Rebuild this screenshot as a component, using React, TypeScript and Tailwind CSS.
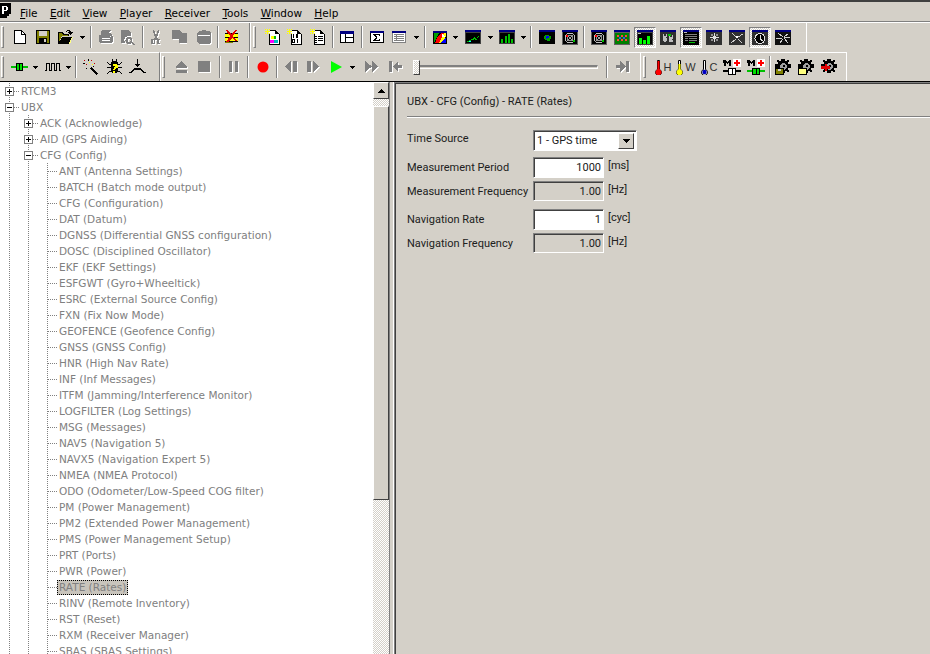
import React from "react";

const GRAY = "#808080";
const S = ({ w = 16, h = 16, children }: { w?: number; h?: number; children?: React.ReactNode }) => (
  <svg width={w} height={h} viewBox={`0 0 ${w} ${h}`} shapeRendering="crispEdges" className="block shrink-0">
    {children}
  </svg>
);
const Dis = ({ d, w = 16, h = 16 }: { d: string; w?: number; h?: number }) => (
  <S w={w} h={h}>
    <path d={d} fill="#fff" transform="translate(1,1)" />
    <path d={d} fill={GRAY} fillRule="evenodd" />
  </S>
);

const Btn = ({ c, children }: { c: string; children?: React.ReactNode }) => (
  <div className={`${c} h-[28px] flex items-center justify-center shrink-0`}>{children}</div>
);
const Arrow = ({ c }: { c: string }) => (
  <Btn c={c}>
    <svg width="5" height="3" viewBox="0 0 5 3" shapeRendering="crispEdges"><path d="M0 0h5v1h-1v1h-1v1h-1v-1h-1v-1h-1z" fill="#000" /></svg>
  </Btn>
);
const Sep = ({ c }: { c: string }) => (
  <div className={`${c} h-[28px] flex items-center justify-center shrink-0`}>
    <div className="w-[2px] h-[22px] border-l border-[#808080] border-r border-r-white" />
  </div>
);
const Grip = ({ c }: { c: string }) => (
  <div className={`${c} h-[28px] flex items-center shrink-0`}>
    <div className="w-[3px] h-[22px] border-l border-t border-white border-r border-b border-r-[#808080] border-b-[#808080]" />
  </div>
);
const Pressed = ({ children }: { children: React.ReactNode }) => (
  <div className="w-[22px] h-[21px] flex items-center justify-center border border-t-[#808080] border-l-[#808080] border-r-white border-b-white bg-[repeating-conic-gradient(#ffffff_0_25%,#d4d0c8_0_50%)] bg-[length:2px_2px]">
    {children}
  </div>
);

const NewDoc = () => (
  <S w={12} h={14}><path d="M0 0h8v1h1v1h1v1h1v1h1v10h-12z" fill="#000" /><path d="M1 1h6v4h4v8h-10zM8 2h1v1h1v1h-2z" fill="#fff" /></S>
);
const Save = () => (
  <S w={14} h={14}>
    <rect width="14" height="14" fill="#000" />
    <rect x="1" y="1" width="12" height="12" fill="#808000" />
    <rect x="3" y="1" width="8" height="5" fill="#d4d0c8" />
    <rect x="3" y="8" width="8" height="5" fill="#000" />
    <rect x="8" y="9" width="2" height="3" fill="#d4d0c8" />
  </S>
);
const OpenF = () => (
  <S w={15} h={14}>
    <path d="M0 3h5v1h6v2h-7l-3 7h-1z" fill="#808000" />
    <path d="M1 13l3-6h11l-3 7h-11z" fill="#ffff80" />
    <path d="M0 2h5v1h1v1h5v2h-1v-1h-5v-1h-1v-1h-3v8h1v-1h1v-2h1v-1h10v1h-1v2h-1v2h-1v2h-12z" fill="#000" />
    <path d="M8 1h1v-1h3v1h1v1h2v1h-1v1h-1v1h-1v-1h-1v-1h-1v-1h1v-1h-2v1h-1z" fill="#000" />
  </S>
);
const Print = () => <Dis w={16} h={14} d="M4 0h9v1h-1v1h-1v1h-8zM3 3h9l2 2v1h-2l-1 1h-8zM1 5h2v2h9l1-1h2v5l-2 2h-11l-1-2zM4 8h8v1h-8zM4 10h8v1h-8z" />;
const Preview = () => <Dis w={16} h={15} d="M0 0h7l3 3v3h-3a4 4 0 0 0 -3 6v1h-4zM8 7a3.500 3.500 0 1 1 -.1 0zM8 9a1.500 1.500 0 1 0 .1 0zM11 12l3 2-1 1-3-2z" />;
const Cut = () => <Dis w={11} h={15} d="M2 0h1l2 5 2-5h1v2l-2 5 1 2h2v5h-3v-3l-1-2-1 2v3h-4v-5h3l1-2-2-5zM2 10v3h1v-3zM8 10v3h1v-3z" />;
const Copy = () => <Dis w={15} h={14} d="M0 0h7l3 3h5v10h-8v-4h-7z" />;
const Paste = () => <Dis w={16} h={15} d="M3 1h3v-1h4v1h3l2 2v9l-2 2h-10l-2-2v-9zM2 5v1h12v-1z" />;
const XDoc = () => (
  <S w={16} h={14}>
    <path d="M1 3h13v9h-13z" fill="#ffff00" />
    <path d="M1 3h13v1h-13zM1 11h13v1h-13zM1 7h13v1h-13z" fill="#000" />
    <path d="M2 0h2v1h1v1h1v1h1v1h1v-1h1v-1h1v-1h1v-1h2l-4 6 3 4h1v1h-2v-1h-1l-2-2-2 3h-1v1h-3l4-6-3-4z" fill="#e00000" />
    <path d="M1 12h8v1h-8z" fill="#808000" />
  </S>
);
const Star = () => <path d="M2 0h1v2h2v1h-2v2h-1v-2h-2v-1h2zM0 0h1v1h-1zM4 0h1v1h-1zM0 4h1v1h-1zM4 4h1v1h-1z" fill="#ffff00" stroke="none" />;
const DocFrame = () => (
  <>
    <path d="M5 2h6l3 3v10h-10v-11z" fill="#fff" />
    <path d="M5 1h6v1h1v1h1v1h1v1h1v11h-11v-12h1zM5 2v2h-0v11h9v-10h-4v-3z" fill="#000" fillRule="evenodd" />
    <Star />
  </>
);
const NewMap = () => (
  <S>
    <DocFrame />
    <rect x="6" y="7" width="3" height="3" fill="#ffff00" /><rect x="9" y="7" width="2" height="3" fill="#00c000" />
    <rect x="5" y="11" width="4" height="3" fill="#ff00ff" /><rect x="9" y="11" width="4" height="3" fill="#00c0c0" />
  </S>
);
const NewBin = () => (
  <S>
    <DocFrame />
    <path d="M6 5h1v4h-1zM9 5h2v4h-2zM5 10h3v4h-3zM10 10h1v4h-1z" fill="#000" />
    <path d="M6 11h1v2h-1zM10 6h0z" fill="#fff" />
  </S>
);
const NewTxt = () => (
  <S>
    <DocFrame />
    <path d="M5 7h2v1h-2zM8 7h5v1h-5zM5 9h2v1h-2zM8 9h5v1h-5zM5 11h2v1h-2zM8 11h5v1h-5zM5 13h2v1h-2z" fill="#000" />
  </S>
);
const Panes = () => (
  <S w={14} h={12}>
    <rect width="14" height="12" fill="#000" /><rect x="1" y="3" width="12" height="8" fill="#fff" />
    <rect x="0" y="0" width="14" height="3" fill="#000080" />
    <rect x="5" y="3" width="1" height="8" fill="#000" /><rect x="5" y="6" width="8" height="1" fill="#000" />
  </S>
);
const Sigma = () => (
  <S w={14} h={12}>
    <rect width="14" height="12" fill="#000" /><rect x="1" y="2" width="12" height="9" fill="#fff" />
    <rect x="0" y="0" width="14" height="2" fill="#000080" />
    <path d="M3 3h7v2h-1v-1h-4l2 2v1l-2 2h4v-1h1v2h-7v-1l3-2.500-3-2.500z" fill="#000" />
  </S>
);
const Table = () => (
  <S w={14} h={12}>
    <rect width="14" height="12" fill="#808080" /><rect x="1" y="2" width="12" height="9" fill="#fff" />
    <rect x="0" y="0" width="14" height="2" fill="#000080" />
    <path d="M2 3h10v1h-10zM2 5h10v1h-10zM2 7h10v1h-10zM2 9h10v1h-10zM4 3h1v7h-1z" fill="#808080" />
  </S>
);
const MapI = () => (
  <S w={14} h={13}>
    <rect width="14" height="13" fill="#000" /><rect width="14" height="2" fill="#000080" />
    <path d="M1 2h5l-2 4-3 6z" fill="#00a000" /><path d="M4 7l4-5h3l-5 10h-4z" fill="#ff0000" /><path d="M6 12l5-10h2v3l-4 7z" fill="#ffff00" />
    <path d="M8 12l5-6v6z" fill="#0000ff" /><path d="M9 2l3 4h-3z" fill="#fff" />
  </S>
);
const LineCh = () => (
  <S w={16} h={14}>
    <rect width="16" height="14" fill="#404040" /><rect width="16" height="2" fill="#000080" /><rect x="1" y="3" width="14" height="10" fill="#000" />
    <path d="M2 11h2v-1h2v-1h2v-1h1v-1h1v1h1v1h1v-2h1v-1h1v1h-1v1h-1v2h-2v-1h-1v1h-3v1h-2v1h-3z" fill="#00c000" />
    <path d="M4 11h2v1h-2z" fill="#00ffff" />
  </S>
);
const BarCh = () => (
  <S w={16} h={14}>
    <rect width="16" height="14" fill="#404040" /><rect width="16" height="2" fill="#000080" /><rect x="1" y="3" width="14" height="10" fill="#000" />
    <path d="M2 9h2v4h-2zM6 6h2v7h-2zM9 4h2v9h-2zM12 9h2v4h-2z" fill="#00c000" />
  </S>
);
const Globe = () => (
  <S w={16} h={14}>
    <rect width="16" height="14" fill="#000" /><rect width="16" height="2" fill="#000080" />
    <path d="M6 5h4v1h2v3h-1v2h-3v-1h-2v-1h-1v-3h1z" fill="#00a000" /><path d="M7 6h3v2h-2v1h-1z" fill="#0000ff" />
  </S>
);
const Radar = () => (
  <S w={16} h={15}>
    <rect width="16" height="15" fill="#606060" /><rect width="16" height="2" fill="#000080" /><rect x="1" y="2" width="14" height="12" fill="#000" />
    <circle cx="8" cy="8" r="5" fill="none" stroke="#c0c0c0" strokeWidth="1" />
    <circle cx="8" cy="8" r="2.500" fill="none" stroke="#909090" strokeWidth="1" />
    <path d="M4 4l8 8M12 4l-8 8" stroke="#a0a0a0" />
    <path d="M11 10h2v2h-2z" fill="#00c000" /><path d="M4 5h2v2h-2z" fill="#ff0000" />
  </S>
);
const Dot = () => (
  <S w={16} h={15}>
    <rect width="16" height="15" fill="#606060" /><rect width="16" height="2" fill="#000080" /><rect x="1" y="3" width="14" height="11" fill="#008000" />
    <path d="M3 5h2v2h-2zM7 5h2v2h-2zM11 5h2v2h-2zM3 9h2v2h-2zM7 9h2v2h-2zM11 9h2v2h-2z" fill="#ff4040" />
    <path d="M5 7h2v2h-2zM9 7h2v2h-2z" fill="#4040ff" />
  </S>
);
const Bars2 = () => (
  <S w={16} h={15}>
    <rect width="16" height="15" fill="#404040" /><rect width="16" height="2" fill="#000080" /><rect x="1" y="3" width="14" height="11" fill="#000" />
    <path d="M2 8h3v6h-3zM6 10h3v4h-3zM10 6h3v8h-3z" fill="#00ff00" />
    <rect x="1" y="3" width="3" height="1" fill="#c0c0c0" />
  </S>
);
const Dish = () => (
  <S w={16} h={15}>
    <rect width="16" height="15" fill="#303030" /><rect width="16" height="2" fill="#000080" />
    <path d="M3 4h1v2h2v-2h1v3h-1v1h1v3h-1v1h-2v-1h-1zM9 5h1v2h2v-2h1v4h-1v1h1v2h-4z" fill="#c0c0c0" />
    <path d="M8 4h3v2h-3z" fill="#00c000" />
  </S>
);
const TextW = () => (
  <S w={16} h={15}>
    <rect width="16" height="15" fill="#000" /><rect width="16" height="2" fill="#000080" />
    <rect x="1" y="2" width="3" height="1" fill="#c0c0c0" />
    <path d="M2 4h12v1h-12zM2 6h12v1h-12zM2 8h3v1h-3zM2 10h3v1h-3zM6 8h8v1h-8zM6 10h8v1h-8z" fill="#808080" />
    <path d="M6 12h6v1h-6z" fill="#00c000" />
  </S>
);
const Compass = () => (
  <S w={16} h={15}>
    <rect width="16" height="15" fill="#303030" /><rect width="16" height="2" fill="#000080" />
    <path d="M8 3h1v3h1v1h3v1h-3v1h-1v3h-1v-3h-1v-1h-3v-1h3v-1h1z" fill="#e0e0e0" />
    <path d="M5 4h2v2h-2zM10 4h2v2h-2zM5 9h2v2h-2zM10 9h2v2h-2z" fill="#909090" />
  </S>
);
const Satel = () => (
  <S w={16} h={15}>
    <rect width="16" height="15" fill="#303030" /><rect width="16" height="2" fill="#000080" />
    <path d="M3 3l4 4M13 13l-4-4M2 13l5-4M14 4l-5 3" stroke="#d0d0d0" strokeWidth="1" fill="none" />
    <path d="M7 6h2v2h-2z" fill="#fff" />
  </S>
);
const Clock = () => (
  <S w={16} h={15}>
    <rect width="16" height="15" fill="#303030" /><rect width="16" height="2" fill="#000080" />
    <circle cx="8" cy="8.500" r="5" fill="#000" stroke="#e0e0e0" strokeWidth="1" />
    <path d="M8 5v4l3 2" stroke="#e0e0e0" strokeWidth="1" fill="none" />
  </S>
);
const Burst = () => (
  <S w={16} h={15}>
    <rect width="16" height="15" fill="#101010" /><rect width="16" height="2" fill="#000080" />
    <path d="M3 3l5 4M13 4l-4 3M1 8h6M9 7h6M5 13l3-4M13 13l-4-5" stroke="#d0d0d0" strokeWidth="1" fill="none" />
  </S>
);

/* row 2 */
const Wire = () => (
  <S w={17} h={8}>
    <rect x="0" y="3" width="17" height="2" fill="#00c000" />
    <rect x="5" y="0" width="7" height="8" fill="#000" /><rect x="6" y="1" width="5" height="6" fill="#00e000" />
    <rect x="8" y="1" width="1" height="6" fill="#000" />
  </S>
);
const Wave = () => (
  <S w={16} h={8}><path d="M0 7.500H1.500V.5H4.500V7.500H6.500V.5H9.500V7.500H11.500V.5H14.500V7.500H16" fill="none" stroke="#000" /></S>
);
const Wand = () => (
  <S w={17} h={16}>
    <path d="M8 8h1v1h1v1h1v1h1v1h1v1h1v1h1v1h-1v1h-1v-1h-1v-1h-1v-1h-1v-1h-1v-1h-1v-1h-1v-1h1z" fill="#000" />
    <path d="M1 1h1v1h-1zM8 1h1v1h-1zM3 5h1v1h-1zM11 4h1v1h-1z" fill="#c00000" />
    <path d="M5 0h1v2h-1zM0 4h2v1h-2zM10 7h1v1h-1zM3 9h1v1h-1z" fill="#000" />
    <path d="M6 3h1v1h-1zM9 5h1v1h-1z" fill="#ffff00" />
  </S>
);
const Bug = () => (
  <S w={15} h={16}>
    <path d="M5 2h5v1h1v10h-1v1h-5v-1h-1v-10h1z" fill="#000" />
    <path d="M0 3h1v1h1v1h2v1h-2v-1h-1v-1h-1zM15 3h-1v1h-1v1h-2v1h2v-1h1v-1h1zM0 8h4v1h-4zM11 8h4v1h-4zM0 14h1v-1h1v-1h2v1h-2v1h-1v1h-1zM15 14h-1v-1h-1v-1h-2v1h2v1h1v1h1z" fill="#000" />
    <path d="M5 0h1v2h-1zM9 0h1v2h-1z" fill="#000" />
    <path d="M6 5h4v1h1v3h-2v1h-1v1h-2v-1h1v-2h1v-1h-2zM6 12h2v2h-2z" fill="#ffff00" />
  </S>
);
const Antenna = () => (
  <S w={17} h={16}>
    <path d="M8 0h1v5h2v1h-1v1h-1v1h-1v-1h-1v-1h-1v-1h2z" fill="#000" />
    <path d="M5 9h7v1h1v1h1v1h1v1h2v1h-3v-1h-1v-1h-1v-1h-7v1h-1v1h-1v1h-4v-1h3v-1h1v-1h1v-1h1z" fill="#000" />
  </S>
);
const Eject = () => <Dis w={13} h={12} d="M6 0h1l5 6v1h-11v-1zM1 9h11v3h-11z" />;
const Stop = () => <Dis w={13} h={12} d="M0 0h12v11h-12z" />;
const Pause = () => <Dis w={10} h={12} d="M0 0h3v11h-3zM6 0h3v11h-3z" />;
const Rec = () => (
  <svg width="12" height="12" viewBox="0 0 12 12" className="block"><circle cx="6" cy="6" r="5.500" fill="#ff0000" /></svg>
);
const Prev = () => <Dis w={13} h={12} d="M6 0v11l-6-5.500zM8 0h4v11h-4z" />;
const Next = () => <Dis w={13} h={12} d="M0 0h4v11h-4zM6 0l6 5.500-6 5.500z" />;
const Play = () => (
  <svg width="11" height="12" viewBox="0 0 11 12" className="block"><path d="M0 0l11 6-11 6z" fill="#00ff00" /></svg>
);
const FF = () => <Dis w={14} h={12} d="M0 0l7 5.500-7 5.500zM7 0l6 5.500-6 5.500z" />;
const Skip = () => <Dis w={14} h={12} d="M0 0h3v11h-3zM9 0v4h4v3h-4v4l-5-5.500z" />;
const SkipE = () => <Dis w={14} h={12} d="M0 4h4v-4l6 5.500-6 5.500v-4h-4zM10 0h3v11h-3z" />;

const Thermo = ({ fill, letter, level }: { fill: string; letter: string; level: "full" | "mid" | "low" }) => (
  <div className="flex items-center">
    <svg width="7" height="16" viewBox="0 0 7 16" className="block">
      <path d="M2.500 1.500h2v9a3 3 0 1 1 -2 0z" fill="#fff" stroke="#000" strokeWidth="1" />
      {level === "full" && <path d="M2.500 2h2v8.500a3 3 0 1 1 -2 0z" fill={fill} />}
      {level === "mid" && <path d="M2.500 5h2v5.500a3 3 0 1 1 -2 0z" fill={fill} />}
      {level === "low" && <circle cx="3.500" cy="13" r="2.200" fill={fill} />}
    </svg>
    <span className="font-['Liberation_Sans',sans-serif] text-[11px] leading-none text-[#303030] ml-[2px]">{letter}</span>
  </div>
);
const MPlus = ({ green = false }: { green?: boolean }) => (
  <S w={18} h={16}>
    <path d="M0 1h3v1h1v1h1v-1h1v-1h2v6h-2v-3h-1v1h-1v-1h-1v3h-2z" fill="#000" />
    <rect x="10" y="0" width="8" height="8" fill="#fff" />
    <path d="M13 1h2v2h2v2h-2v2h-2v-2h-2v-2h2z" fill="#ff0000" />
    <rect x="0" y="11" width="18" height="2" fill={green ? "#00c000" : "#000"} />
    <rect x="5" y="9" width="8" height="7" fill="#000" />
    <rect x="6" y="10" width="6" height="5" fill={green ? "#00e000" : "#fff"} />
    <rect x="9" y="10" width="1" height="5" fill="#000" />
  </S>
);
const Gear = ({ children }: { children?: React.ReactNode }) => (
  <S w={16} h={16}>
    <path d="M6 0h4v2h2v-1h2v2h-1v2h3v4h-3v2h1v2h-2v-1h-2v2h-4v-2h-2v1h-2v-2h1v-2h-3v-4h3v-2h-1v-2h2v1h2z" fill="#000" />
    <path d="M7 4h3v1h1v1h1v3h-1v1h-1v1h-3v-1h-1v-1h-1v-3h1v-1h1z" fill="#a0a0a0" />
    <path d="M8 6h2v2h-2z" fill="#000" />
    {children}
  </S>
);

const RowA = () => (
  <div className="flex h-[30px] border-t border-t-white shrink-0">
    <div className="flex w-[250px] shrink-0 border-r border-r-[#808080]">
      <Grip c="w-[8px] pl-[1px]" />
      <Btn c="w-[23px]"><NewDoc /></Btn>
      <Btn c="w-[23px]"><Save /></Btn>
      <Btn c="w-[23px]"><OpenF /></Btn>
      <Arrow c="w-[10px]" />
      <Sep c="w-[7px]" />
      <Btn c="w-[23px]"><Print /></Btn>
      <Btn c="w-[23px]"><Preview /></Btn>
      <Sep c="w-[6px]" />
      <Btn c="w-[20px]"><Cut /></Btn>
      <Btn c="w-[27px]"><Copy /></Btn>
      <Btn c="w-[22px]"><Paste /></Btn>
      <Sep c="w-[6px]" />
      <Btn c="w-[22px]"><XDoc /></Btn>
    </div>
    <div className="flex w-[557px] shrink-0 border-l border-l-white border-r border-r-white">
      <Grip c="w-[11px] pl-[2px]" />
      <Btn c="w-[21px]"><NewMap /></Btn>
      <Btn c="w-[23px]"><NewBin /></Btn>
      <Btn c="w-[24px]"><NewTxt /></Btn>
      <Sep c="w-[6px]" />
      <Btn c="w-[22px]"><Panes /></Btn>
      <Sep c="w-[8px]" />
      <Btn c="w-[21px]"><Sigma /></Btn>
      <Btn c="w-[24px]"><Table /></Btn>
      <Arrow c="w-[10px]" />
      <Sep c="w-[8px]" />
      <Btn c="w-[21px]"><MapI /></Btn>
      <Arrow c="w-[10px]" />
      <Btn c="w-[26px]"><LineCh /></Btn>
      <Arrow c="w-[8px]" />
      <Btn c="w-[26px]"><BarCh /></Btn>
      <Arrow c="w-[7px]" />
      <Sep c="w-[8px]" />
      <Btn c="w-[23px]"><Globe /></Btn>
      <Btn c="w-[23px]"><Radar /></Btn>
      <Sep c="w-[6px]" />
      <Btn c="w-[23px]"><Radar /></Btn>
      <Btn c="w-[23px]"><Dot /></Btn>
      <Btn c="w-[23px]"><Pressed><Bars2 /></Pressed></Btn>
      <Btn c="w-[23px]"><Dish /></Btn>
      <Btn c="w-[23px]"><Pressed><TextW /></Pressed></Btn>
      <Btn c="w-[23px]"><Compass /></Btn>
      <Btn c="w-[23px]"><Satel /></Btn>
      <Btn c="w-[23px]"><Pressed><Clock /></Pressed></Btn>
      <Btn c="w-[23px]"><Burst /></Btn>
    </div>
  </div>
);

const RowB = () => (
  <div className="flex h-[30px] border-b border-b-black shrink-0">
    <div className="flex w-[160px] shrink-0 border-t border-t-white border-r border-r-[#808080]">
      <Grip c="w-[8px] pl-[1px]" />
      <Btn c="w-[22px]"><Wire /></Btn>
      <Arrow c="w-[11px]" />
      <Btn c="w-[23px]"><Wave /></Btn>
      <Arrow c="w-[9px]" />
      <Sep c="w-[6px]" />
      <Btn c="w-[24px]"><Wand /></Btn>
      <Btn c="w-[23px]"><Bug /></Btn>
      <Btn c="w-[23px]"><Antenna /></Btn>
    </div>
    <div className="flex w-[481px] shrink-0 border-t border-t-white border-l border-l-white border-r border-r-white">
      <Grip c="w-[10px] pl-[1px]" />
      <Btn c="w-[21px]"><Eject /></Btn>
      <Btn c="w-[25px]"><Stop /></Btn>
      <Sep c="w-[5px]" />
      <Btn c="w-[23px]"><Pause /></Btn>
      <Sep c="w-[6px]" />
      <Btn c="w-[23px]"><Rec /></Btn>
      <Sep c="w-[6px]" />
      <Btn c="w-[22px]"><Prev /></Btn>
      <Btn c="w-[23px]"><Next /></Btn>
      <Btn c="w-[22px]"><Play /></Btn>
      <Arrow c="w-[10px]" />
      <Btn c="w-[29px]"><FF /></Btn>
      <Btn c="w-[20px]"><Skip /></Btn>
      <div className="w-[196px] h-[28px] flex items-center ml-[2px] shrink-0">
        <div className="w-[7px] h-[15px] ml-[5px] shrink-0 border border-t-white border-l-white border-r-[#404040] border-b-[#404040] bg-[repeating-conic-gradient(#ffffff_0_25%,#d4d0c8_0_50%)] bg-[length:2px_2px]" />
        <div className="w-[178px] h-[4px] border-t-2 border-t-[#808080] border-b border-b-white border-r border-r-white" />
      </div>
      <Sep c="w-[6px]" />
      <Btn c="w-[26px]"><SkipE /></Btn>
    </div>
    <div className="flex w-[206px] shrink-0 border-t border-t-white border-r border-r-white">
      <Grip c="w-[11px] pl-[2px]" />
      <Btn c="w-[22px]"><Thermo fill="#ff0000" letter="H" level="full" /></Btn>
      <Btn c="w-[24px]"><Thermo fill="#ffff00" letter="W" level="mid" /></Btn>
      <Btn c="w-[22px]"><Thermo fill="#0000c0" letter="C" level="low" /></Btn>
      <Btn c="w-[24px]"><MPlus /></Btn>
      <Btn c="w-[24px]"><MPlus green /></Btn>
      <Sep c="w-[3px]" />
      <Btn c="w-[23px]"><Gear><path d="M0 9h9v7h-9z" fill="#000" /><path d="M1 10h7v5h-7z" fill="#808000" /><path d="M3 10h3v2h-3z" fill="#d0d0d0" /></Gear></Btn>
      <Btn c="w-[23px]"><Gear><path d="M0 9h9v7h-9z" fill="#000" /><path d="M1 10h7v5h-7z" fill="#ffff80" /></Gear></Btn>
      <Btn c="w-[24px]"><Gear><path d="M0 7h4v-2h2v2h3v3h-3v2h-2v-2h-4z" fill="#e00000" /></Gear></Btn>
    </div>
  </div>
);

type Kind = "v" | "t" | "plus" | "minus";
const Cell = ({ k }: { k: Kind }) => (
  <svg width="19" height="16" viewBox="0 0 19 16" shapeRendering="crispEdges" className="block shrink-0">
    <path d="M9.500 0V16" stroke={GRAY} strokeDasharray="1 1" />
    {k !== "v" && <path d="M10 8.500H19" stroke={GRAY} strokeDasharray="1 1" />}
    {(k === "plus" || k === "minus") && (
      <>
        <rect x="5.500" y="4.500" width="8" height="8" fill="#fff" stroke={GRAY} />
        <path d="M7 8.500h5" stroke="#000" />
        {k === "plus" && <path d="M9.500 6v5" stroke="#000" />}
      </>
    )}
  </svg>
);

const Row = ({ cells, children, sel = false }: { cells: Kind[]; children: string; sel?: boolean }) => (
  <div className="flex h-[16px] items-center shrink-0">
    {cells.map((k, i) => <Cell key={i} k={k} />)}
    {sel ? (
      <span className="h-[15px] flex items-center px-[1px] ml-[0px] bg-[#c8c4bc] border border-dotted border-black text-[#808080] whitespace-nowrap">{children}</span>
    ) : (
      <span className="ml-[2px] text-[#808080] whitespace-nowrap">{children}</span>
    )}
  </div>
);

const leaves = [
  "ANT (Antenna Settings)", "BATCH (Batch mode output)", "CFG (Configuration)", "DAT (Datum)",
  "DGNSS (Differential GNSS configuration)", "DOSC (Disciplined Oscillator)", "EKF (EKF Settings)",
  "ESFGWT (Gyro+Wheeltick)", "ESRC (External Source Config)", "FXN (Fix Now Mode)", "GEOFENCE (Geofence Config)",
  "GNSS (GNSS Config)", "HNR (High Nav Rate)", "INF (Inf Messages)", "ITFM (Jamming/Interference Monitor)",
  "LOGFILTER (Log Settings)", "MSG (Messages)", "NAV5 (Navigation 5)", "NAVX5 (Navigation Expert 5)",
  "NMEA (NMEA Protocol)", "ODO (Odometer/Low-Speed COG filter)", "PM (Power Management)",
  "PM2 (Extended Power Management)", "PMS (Power Management Setup)", "PRT (Ports)", "PWR (Power)",
  "RATE (Rates)", "RINV (Remote Inventory)", "RST (Reset)", "RXM (Receiver Manager)", "SBAS (SBAS Settings)",
];

const Tree = () => (
  <div className="flex-1 min-w-0 overflow-hidden bg-white pt-[1px] font-['DejaVu_Sans',sans-serif] text-[10.5px] leading-none flex flex-col">
    <Row cells={["plus"]}>RTCM3</Row>
    <Row cells={["minus"]}>UBX</Row>
    <Row cells={["v", "plus"]}>ACK (Acknowledge)</Row>
    <Row cells={["v", "plus"]}>AID (GPS Aiding)</Row>
    <Row cells={["v", "minus"]}>CFG (Config)</Row>
    {leaves.map((l) => (
      <Row key={l} cells={["v", "v", "t"]} sel={l === "RATE (Rates)"}>{l}</Row>
    ))}
  </div>
);

const Scrollbar = () => (
  <div className="w-[16px] shrink-0 flex flex-col bg-[repeating-conic-gradient(#ffffff_0_25%,#d4d0c8_0_50%)] bg-[length:2px_2px]">
    <div className="h-[17px] bg-[#d4d0c8] flex items-center justify-center border border-t-white border-l-white border-r-[#404040] border-b-[#404040]">
      <svg width="7" height="4" viewBox="0 0 7 4" shapeRendering="crispEdges"><path d="M3 0h1v1h1v1h1v1h1v1h-7v-1h1v-1h1v-1h1z" fill="#000" /></svg>
    </div>
    <div className="h-[394px] mt-[7px] bg-[#d4d0c8] border border-t-white border-l-white border-r-[#404040] border-b-[#404040]" />
  </div>
);

const Field = ({ value, editable }: { value: string; editable: boolean }) => (
  <div className={`w-[71px] flex items-center justify-end pr-[2px] border border-t-[#808080] border-l-[#808080] border-r-white border-b-white shadow-[inset_1px_1px_0_#404040] ${editable ? "h-[21px] bg-white" : "h-[20px] bg-[#d4d0c8]"}`}>
    {value}
  </div>
);

const FormRow = ({ label, c, lc = "", children, unit }: { label: string; c: string; lc?: string; children: React.ReactNode; unit?: string }) => (
  <div className={`flex ${c} items-center`}>
    <div className={`w-[126px] shrink-0 whitespace-nowrap ${lc}`}>{label}</div>
    {children}
    {unit && <div className="ml-[4px] -mt-[4px]">{unit}</div>}
  </div>
);

const Panel = () => (
  <div className="flex-1 min-w-0 border-l border-l-[#808080] border-t border-t-[#808080] shadow-[inset_1px_1px_0_#404040] pl-[12px] text-[#202020] font-['Roboto',sans-serif] text-[11px] leading-none">
    <div className="h-[34px] pt-[3px] flex items-center border-b border-b-[#808080]">UBX - CFG (Config) - RATE (Rates)</div>
    <div className="h-[1px] bg-white" />
    <div className="flex flex-col mt-[12px]">
      <FormRow label="Time Source" c="h-[21px] mb-[6px]" lc="-mt-[4px]">
        <div className="w-[104px] h-[21px] flex items-center justify-between pl-[3px] pr-[2px] border border-t-[#808080] border-l-[#808080] border-r-white border-b-white shadow-[inset_1px_1px_0_#404040] bg-white">
          <span>1 - GPS time</span>
          <div className="w-[16px] h-[16px] bg-[#d4d0c8] flex items-center justify-center border border-t-white border-l-white border-r-[#404040] border-b-[#404040]">
            <svg width="7" height="4" viewBox="0 0 7 4" shapeRendering="crispEdges"><path d="M0 0h7v1h-1v1h-1v1h-1v1h-1v-1h-1v-1h-1v-1h-1z" fill="#000" /></svg>
          </div>
        </div>
      </FormRow>
      <FormRow label="Measurement Period" c="h-[21px] mb-[3px]" unit="[ms]"><Field value="1000" editable /></FormRow>
      <FormRow label="Measurement Frequency" c="h-[20px] mb-[8px]" unit="[Hz]"><Field value="1.00" editable={false} /></FormRow>
      <FormRow label="Navigation Rate" c="h-[21px] mb-[3px]" unit="[cyc]"><Field value="1" editable /></FormRow>
      <FormRow label="Navigation Frequency" c="h-[20px]" unit="[Hz]"><Field value="1.00" editable={false} /></FormRow>
    </div>
  </div>
);

export default function App() {
  const menu = ["File", "Edit", "View", "Player", "Receiver", "Tools", "Window", "Help"];
  return (
    <div className="w-[930px] h-[654px] overflow-hidden bg-[#d4d0c8] flex flex-col border-t-2 border-t-[#404040]">
      <div className="h-[20px] flex shrink-0 border-b border-b-[#808080] font-['DejaVu_Sans',sans-serif] text-[10.5px] leading-none text-black">
        <div className="w-[20px] shrink-0 pt-[1px]">
          <svg width="11" height="15" viewBox="0 0 11 15" shapeRendering="crispEdges" className="block">
            <path d="M0 0h11v11h-2v2h-2v2h-7z" fill="#000" />
            <path d="M2 3h5v1h1v3h-1v1h-3v3h-2zM4 4v3h2v-3z" fill="#fff" />
          </svg>
        </div>
        <div className="flex gap-[12.3px] pt-[6px]">
          {menu.map((m) => <span key={m}><u>{m[0]}</u>{m.slice(1)}</span>)}
        </div>
      </div>
      <RowA />
      <RowB />
      <div className="flex-1 min-h-0 flex">
        <div className="w-[389px] shrink-0 flex">
          <Tree />
          <Scrollbar />
        </div>
        <div className="w-[5px] shrink-0 border-l border-l-[#808080] border-r border-r-white" />
        <Panel />
      </div>
    </div>
  );
}
